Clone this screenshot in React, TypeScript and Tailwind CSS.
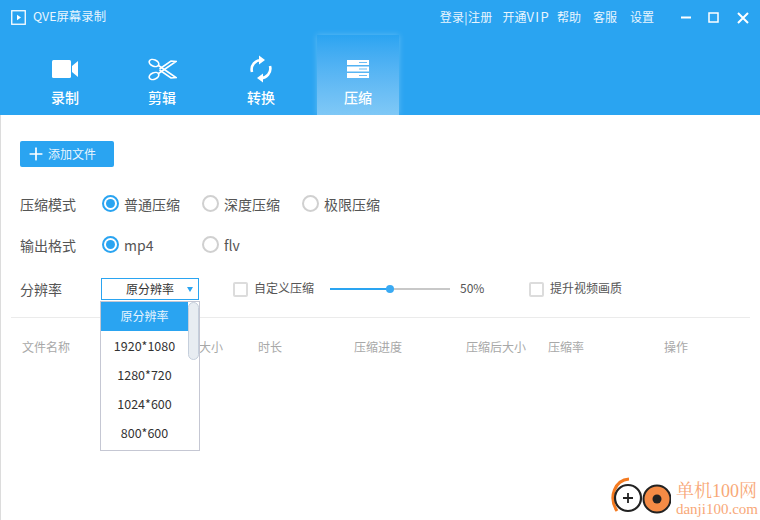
import React from 'react';
import { Plus } from 'lucide-react';

const font = "font-['Noto_Sans_CJK_SC','Noto_Sans',sans-serif]";

function Radio({ checked, label, width }: { checked?: boolean; label: string; width: string }) {
  return (
    <div className={`flex items-center gap-[5px] ${width}`}>
      {checked ? (
        <span className="flex h-[17px] w-[17px] items-center justify-center rounded-full border-2 border-[#2aa4f1]">
          <span className="h-[9px] w-[9px] rounded-full bg-[#2aa4f1]" />
        </span>
      ) : (
        <span className="h-[17px] w-[17px] rounded-full border-2 border-[#d0d0d0]" />
      )}
      <span className="translate-y-px text-[14px] leading-none text-[#555]">{label}</span>
    </div>
  );
}

function Checkbox({ label }: { label: string }) {
  return (
    <div className="flex items-center gap-[6px]">
      <span className="h-[15px] w-[15px] rounded-[2px] border-2 border-[#dcdcdc]" />
      <span className="-translate-y-px text-[12px] leading-none text-[#555]">{label}</span>
    </div>
  );
}

function Tab({ label, active, children }: { label: string; active?: boolean; children: React.ReactNode }) {
  return (
    <div
      className={`flex h-[80px] w-[82px] flex-col items-center justify-end pb-[9px] ${
        active ? 'bg-gradient-to-b from-[#2aa4f1] to-[#7fc8f6] shadow-[0_0_6px_rgba(255,255,255,0.25)]' : ''
      }`}
    >
      <div className="flex h-[30px] items-center justify-center">{children}</div>
      <span className="mt-[4px] text-[14px] font-medium leading-[18px] text-white">{label}</span>
    </div>
  );
}

export default function App() {
  const options = ['1920*1080', '1280*720', '1024*600', '800*600'];

  return (
    <div className={`relative h-[520px] w-[760px] overflow-hidden bg-white ${font}`}>
      {/* header */}
      <div className="h-[115px] bg-[#2aa4f1] text-white">
        <div className="flex h-[35px] items-center pl-[11px] pr-[11px]">
          <svg width="15" height="15" viewBox="0 0 15 15" fill="none">
            <rect x="0.75" y="0.75" width="13.5" height="13.5" stroke="white" strokeWidth="1.3" />
            <path d="M6 4.8 L10 7.5 L6 10.2 Z" fill="white" />
          </svg>
          <span className="ml-[7px] -translate-y-px text-[12.4px] leading-none text-[#e8f5fe]">QVE屏幕录制</span>
          <div className="ml-auto flex -translate-y-px items-center text-[12px] leading-none text-[#e8f5fe]">
            <span className="tracking-[0.3px]">登录|注册</span>
            <span className="ml-[10px]">
              开通<span className="text-[13px] tracking-[1.3px]">VIP</span>
            </span>
            <span className="ml-[7px]">帮助</span>
            <span className="ml-[12px]">客服</span>
            <span className="ml-[13px]">设置</span>
          </div>
          <div className="ml-[26px] flex items-center">
            <svg width="11" height="11" viewBox="0 0 11 11"><rect x="1" y="4.5" width="10" height="2" fill="white" /></svg>
            <svg className="ml-[17px]" width="11" height="11" viewBox="0 0 11 11" fill="none"><rect x="1" y="1" width="9" height="9" stroke="white" strokeWidth="1.5" /></svg>
            <svg className="ml-[18px]" width="12" height="12" viewBox="0 0 12 12" fill="none"><path d="M1 1 L11 11 M11 1 L1 11" stroke="white" strokeWidth="2" /></svg>
          </div>
        </div>
        <div className="flex pl-[24px]">
          <Tab label="录制">
            <svg width="26" height="18" viewBox="0 0 26 18" fill="white">
              <rect x="0" y="0" width="19" height="18" rx="1.5" />
              <path d="M20 6 L26 1 V17 L20 12 Z" />
            </svg>
          </Tab>
          <div className="w-[15px]" />
          <Tab label="剪辑">
            <svg width="29" height="23" viewBox="0 0 29 23" fill="none" stroke="white" strokeWidth="1.6">
              <ellipse cx="6" cy="5" rx="5" ry="3.2" transform="rotate(22 6 5)" />
              <ellipse cx="6" cy="18" rx="5" ry="3.2" transform="rotate(-22 6 18)" />
              <path d="M10.5 7.5 L28 19.5 L23 20 L11.5 12" />
              <path d="M10.5 15.5 L28 3.5 L23 3 L11.5 11" />
            </svg>
          </Tab>
          <div className="w-[17px]" />
          <Tab label="转换">
            <svg width="22" height="28" viewBox="0 0 22 28" fill="none" stroke="white" strokeWidth="2.6">
              <path d="M2 17 A9.5 9.5 0 0 1 12 5" />
              <path d="M20 11 A9.5 9.5 0 0 1 10 23" />
              <path d="M9 0.5 L15 5 L9 9.5 Z" fill="white" stroke="none" />
              <path d="M13 18.5 L7 23 L13 27.5 Z" fill="white" stroke="none" />
            </svg>
          </Tab>
          <div className="w-[15px]" />
          <Tab label="压缩" active>
            <svg width="22" height="18" viewBox="0 0 22 18">
              <rect x="0" y="0" width="22" height="5" fill="white" />
              <rect x="0" y="6.5" width="22" height="5" fill="white" />
              <rect x="0" y="13" width="22" height="5" fill="white" />
              <rect x="12" y="2" width="8" height="1" fill="#6dbdf4" />
              <rect x="12" y="8.5" width="8" height="1" fill="#6dbdf4" />
              <rect x="12" y="15" width="8" height="1" fill="#6dbdf4" />
            </svg>
          </Tab>
        </div>
      </div>

      {/* body */}
      <div className="h-[405px] border-l border-[#dcdcdc] pl-[19px] pt-[26px]">
        <button className="flex h-[26px] w-[94px] items-center rounded-[2px] bg-[#2aa4f1] pl-[6px] text-[12px] text-[#e8f5fe]">
          <Plus size={20} strokeWidth={2} color="white" />
          <span className="ml-[2px]">添加文件</span>
        </button>

        <div className="mt-[25px] flex h-[22px] items-center">
          <span className="w-[82px] translate-y-px text-[14px] leading-none text-[#555]">压缩模式</span>
          <Radio checked label="普通压缩" width="w-[100px]" />
          <Radio label="深度压缩" width="w-[100px]" />
          <Radio label="极限压缩" width="w-[100px]" />
        </div>

        <div className="mt-[19px] flex h-[22px] items-center">
          <span className="w-[82px] translate-y-px text-[14px] leading-none text-[#555]">输出格式</span>
          <Radio checked label="mp4" width="w-[100px]" />
          <Radio label="flv" width="w-[100px]" />
        </div>

        <div className="mt-[22px] flex h-[24px] items-center">
          <span className="w-[81px] text-[14px] leading-none text-[#555]">分辨率</span>
          <div className="relative flex h-[22px] w-[98px] items-center justify-center border border-[#2aa4f1] text-[12px] leading-none text-[#333]">
            原分辨率
            <span className="absolute right-[5px] top-[8px] h-0 w-0 border-x-[3px] border-t-[5px] border-x-transparent border-t-[#2aa4f1]" />
          </div>
          <div className="ml-[34px] w-[97px]">
            <Checkbox label="自定义压缩" />
          </div>
          <div className="relative h-[2px] w-[120px] bg-[#c8c8c8]">
            <div className="h-[2px] w-[60px] bg-[#2aa4f1]" />
            <span className="absolute left-[56px] top-[-3px] h-[8px] w-[8px] rounded-full bg-[#3aaaf3]" />
          </div>
          <span className="ml-[10px] w-[69px] -translate-y-px text-[12px] leading-none text-[#555]">50%</span>
          <Checkbox label="提升视频画质" />
        </div>

        <div className="ml-[-9px] mr-[10px] mt-[16px] h-px bg-[#ebebeb]" />

        <div className="mt-[21px] flex text-[12px] leading-[16px] text-[#a8a8a8]">
          <span className="ml-[2px] w-[177px]">文件名称</span>
          <span className="w-[59px]">大小</span>
          <span className="w-[96px]">时长</span>
          <span className="w-[112px]">压缩进度</span>
          <span className="w-[82px]">压缩后大小</span>
          <span className="w-[116px]">压缩率</span>
          <span>操作</span>
        </div>
      </div>

      {/* dropdown */}
      <div className="absolute left-[100px] top-[301px] w-[100px] border border-[#c5c7d3] bg-white pb-[3px] text-[12.5px] text-[#333]">
        <div className="flex h-[29px] w-[87px] items-center justify-center bg-[#2aa4f1] pb-[2px] text-[12px] text-[#e8f5fe]">原分辨率</div>
        {options.map((o) => (
          <div key={o} className="flex h-[29px] w-[87px] items-center justify-center pt-[2px] text-[#333]">
            {o}
          </div>
        ))}
        <div className="absolute right-0 top-0 h-[58px] w-[11px] rounded-full border border-[#c5cfdc] bg-[#e8edf2]" />
      </div>

      {/* watermark */}
      <div className="absolute bottom-0 right-0 flex h-[50px] w-[155px] items-center justify-end bg-white pr-[2px]">
        <svg width="62" height="44" viewBox="0 0 62 44" fill="none" className="mr-[5px] mt-[4px]">
          <path d="M20 4 C6 5 -1 22 8 36" stroke="#f47a20" strokeWidth="3" />
          <circle cx="19" cy="23" r="13" stroke="#222" strokeWidth="2.2" fill="white" />
          <path d="M14 23 H24 M19 18 V28" stroke="#222" strokeWidth="1.8" />
          <circle cx="48" cy="24" r="13.5" fill="#f58b45" stroke="#222" strokeWidth="2" />
          <circle cx="48" cy="24" r="4.5" fill="#222" />
        </svg>
        <div className="mt-[8px] flex flex-col items-start font-['Liberation_Serif','Noto_Serif_CJK_SC',serif] text-[#f8a878]">
          <span className="text-[18px] leading-[20px]">单机100网</span>
          <span className="text-[15px] leading-[17px]">danji100.com</span>
        </div>
      </div>
    </div>
  );
}
